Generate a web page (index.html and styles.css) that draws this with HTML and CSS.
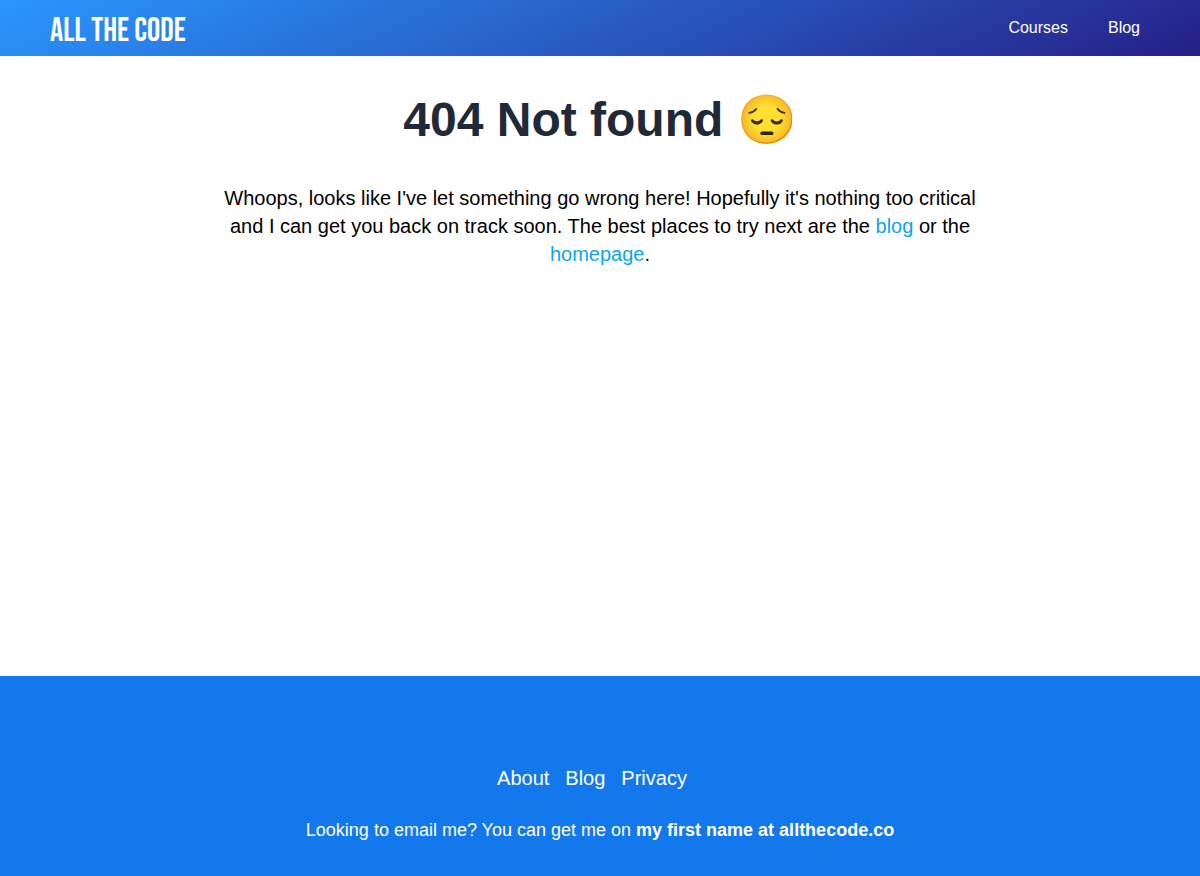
FILE: index.html
```html
<!DOCTYPE html>
<html lang="en">
<head>
<meta charset="utf-8">
<meta name="viewport" content="width=device-width, initial-scale=1">
<title>404 Not found | All The Code</title>
<link rel="stylesheet" href="styles.css">
</head>
<body>
<header class="header">
  <a class="logo" href="#">ALL THE CODE</a>
  <nav class="nav">
    <a href="#">Courses</a>
    <a href="#">Blog</a>
  </nav>
</header>
<main class="main">
  <h1 class="title">404 Not found 😔</h1>
  <p class="message">Whoops, looks like I've let something go wrong here! Hopefully it's nothing too critical and I can get you back on track soon. The best places to try next are the <a href="#">blog</a> or the <a href="#">homepage</a>.</p>
</main>
<footer class="footer">
  <nav class="footer-nav">
    <a href="#">About</a>
    <a href="#">Blog</a>
    <a href="#">Privacy</a>
  </nav>
  <p class="contact">Looking to email me? You can get me on <strong>my first name at allthecode.co</strong></p>
</footer>
</body>
</html>
```
FILE: styles.css
```css
* {
  box-sizing: border-box;
}

body {
  display: flex;
  flex-direction: column;
  min-height: 100vh;
  margin: 0;
  background: #fff;
  color: #000;
  font-family: "Liberation Sans", Arial, sans-serif;
  font-size: 16px;
  line-height: 24px;
}

a {
  color: inherit;
  text-decoration: none;
}

.header {
  display: flex;
  align-items: center;
  justify-content: space-between;
  min-height: 56px;
  padding: 0 60px 0 50px;
  background: linear-gradient(155deg, #2997ff 0%, #2856bd 55%, #261f86 100%);
  color: #fff;
}

.logo {
  padding-top: 6px;
  font-family: "Bebas Neue", "Liberation Sans Narrow", "Liberation Sans", sans-serif;
  font-size: 33px;
  font-weight: 400;
  line-height: 48px;
}

.nav {
  display: flex;
  gap: 40px;
}

.main {
  flex: 1;
  width: 100%;
  max-width: 768px;
  margin: 0 auto;
  padding: 40px 0;
  text-align: center;
}

.title {
  margin: 0 0 40px;
  color: #1f2937;
  font-size: 48px;
  font-weight: 700;
  line-height: 48px;
}

.message {
  margin: 0;
  font-size: 20px;
  line-height: 28px;
}

.message a {
  color: #0ea5e9;
}

.footer {
  padding: 88px 16px 32px;
  background: #1378ec;
  color: #fff;
  text-align: center;
}

.footer-nav {
  display: flex;
  justify-content: center;
  gap: 16px;
  padding-right: 16px;
  font-size: 20px;
  line-height: 28px;
}

.contact {
  margin: 24px 0 0;
  font-size: 18px;
  line-height: 28px;
}
```
